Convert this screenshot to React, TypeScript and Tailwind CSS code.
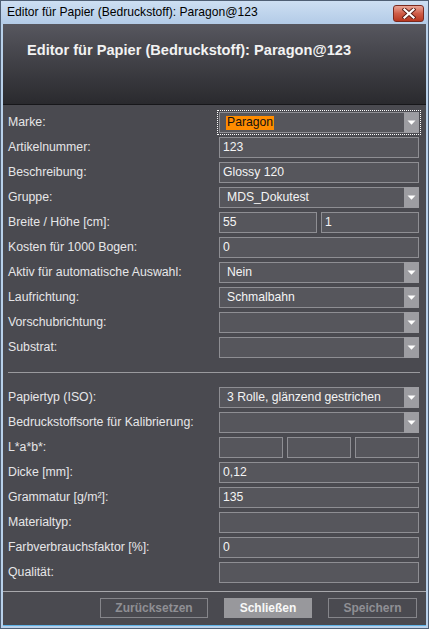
import React from "react";

const Label = ({ children }: { children: React.ReactNode }) => (
  <div className="w-[211px] shrink-0 text-[12.3px] text-[#e6e6e8] leading-none whitespace-nowrap">{children}</div>
);

const Text = ({ value }: { value?: string }) => (
  <div className="h-[21px] flex-1 border border-[#8e8e93] bg-[#56565c] flex items-center pl-[3px] text-[12.2px] text-[#f4f4f4] leading-none">
    {value}
  </div>
);

const Arrow = () => (
  <div className="w-[15px] -my-px -mr-px bg-[#9d9da2] flex items-center justify-center">
    <svg width="9" height="5" viewBox="0 0 9 5">
      <path d="M0.5 0.5 L8.5 0.5 L4.5 4.8 Z" fill="#ffffff" />
    </svg>
  </div>
);

const Combo = ({ value, focus }: { value?: string; focus?: boolean }) => (
  <div
    className={
      focus
        ? "h-[21px] flex-1 border border-[#8e8e93] bg-[#56565c] flex items-stretch outline-1 outline-dotted outline-white outline-offset-1"
        : "h-[21px] flex-1 border border-[#8e8e93] bg-[#56565c] flex items-stretch"
    }
  >
    <div className="flex-1 flex items-center pl-[6px] text-[12.2px] text-[#f4f4f4] leading-none">
      {focus ? (
        <span className="bg-[#ff8c00] text-[#111111] px-px h-[14px] flex items-center">{value}</span>
      ) : (
        <span className="pl-px">{value}</span>
      )}
    </div>
    <Arrow />
  </div>
);

const Row = ({ label, children }: { label: string; children: React.ReactNode }) => (
  <div className="flex items-center h-[21px]">
    <Label>{label}</Label>
    <div className="flex-1 flex gap-[4px]">{children}</div>
  </div>
);

export default function App() {
  return (
    <div className="w-[429px] h-[629px] border border-[#4f5f74] bg-[#b9d1ea] flex flex-col font-['Liberation_Sans',Arial,sans-serif]">
      {/* title bar */}
      <div className="h-[23px] shrink-0 bg-gradient-to-b from-[#cddff2] to-[#b3cbe7] flex items-center justify-between pl-[6px] pr-[4px]">
        <span className="text-[12.1px] text-black leading-none">Editor für Papier (Bedruckstoff): Paragon@123</span>
        <div className="w-[31px] h-[17px] mt-[1px] rounded-[3px] border border-[#7a2a20] bg-gradient-to-b from-[#e9a597] via-[#cf5d48] to-[#b8371f] flex items-center justify-center">
          <svg width="14" height="11" viewBox="0 0 14 11">
            <path d="M2.5 1.5 L11.5 9.5 M11.5 1.5 L2.5 9.5" stroke="#5a1e16" strokeWidth="4" strokeLinecap="square" />
            <path d="M2.5 1.5 L11.5 9.5 M11.5 1.5 L2.5 9.5" stroke="#ffffff" strokeWidth="2.2" strokeLinecap="square" />
          </svg>
        </div>
      </div>

      {/* body */}
      <div className="mx-[2px] flex-1 flex flex-col bg-[#4a4a50]">
        {/* header */}
        <div className="h-[81px] shrink-0 bg-gradient-to-b from-[#57575f] to-[#2a2a2e] border-b border-[#17171a] pl-[24px] pt-[14px]">
          <span className="text-[14.6px] font-bold text-[#f2f2f2] leading-none">Editor für Papier (Bedruckstoff): Paragon@123</span>
        </div>

        {/* content */}
        <div className="flex flex-col pl-[5px] pr-[7px] pt-[7px]">
          <div className="flex flex-col gap-[4px]">
            <Row label="Marke:"><Combo value="Paragon" focus /></Row>
            <Row label="Artikelnummer:"><Text value="123" /></Row>
            <Row label="Beschreibung:"><Text value="Glossy 120" /></Row>
            <Row label="Gruppe:"><Combo value="MDS_Dokutest" /></Row>
            <Row label="Breite / Höhe [cm]:"><Text value="55" /><Text value="1" /></Row>
            <Row label="Kosten für 1000 Bogen:"><Text value="0" /></Row>
            <Row label="Aktiv für automatische Auswahl:"><Combo value="Nein" /></Row>
            <Row label="Laufrichtung:"><Combo value="Schmalbahn" /></Row>
            <Row label="Vorschubrichtung:"><Combo /></Row>
            <Row label="Substrat:"><Combo /></Row>
          </div>
          <div className="h-px bg-[#9a9a9e] mt-[14px] mb-[14px] mr-[-1px]" />
          <div className="flex flex-col gap-[4px]">
            <Row label="Papiertyp (ISO):"><Combo value="3 Rolle, glänzend gestrichen" /></Row>
            <Row label="Bedruckstoffsorte für Kalibrierung:"><Combo /></Row>
            <Row label="L*a*b*:"><Text /><Text /><Text /></Row>
            <Row label="Dicke [mm]:"><Text value="0,12" /></Row>
            <Row label="Grammatur [g/m²]:"><Text value="135" /></Row>
            <Row label="Materialtyp:"><Text /></Row>
            <Row label="Farbverbrauchsfaktor [%]:"><Text value="0" /></Row>
            <Row label="Qualität:"><Text /></Row>
          </div>
        </div>

        {/* footer */}
        <div className="h-px bg-[#a8a8ac] mt-[8px]" />
        <div className="flex justify-end gap-[16px] pr-[9px] pt-[6px]">
          <div className="w-[108px] h-[20px] border border-[#85858a] flex items-center justify-center text-[12px] font-bold text-[#8f8f94] leading-none">Zurücksetzen</div>
          <div className="w-[88px] h-[20px] bg-[#98989c] flex items-center justify-center text-[12px] font-bold text-[#f8f8f8] leading-none">Schließen</div>
          <div className="w-[89px] h-[20px] border border-[#85858a] flex items-center justify-center text-[12px] font-bold text-[#8f8f94] leading-none">Speichern</div>
        </div>
      </div>
      <div className="h-[3px] shrink-0 mx-[2px] border-t border-[#5fb3e6]" />
    </div>
  );
}
